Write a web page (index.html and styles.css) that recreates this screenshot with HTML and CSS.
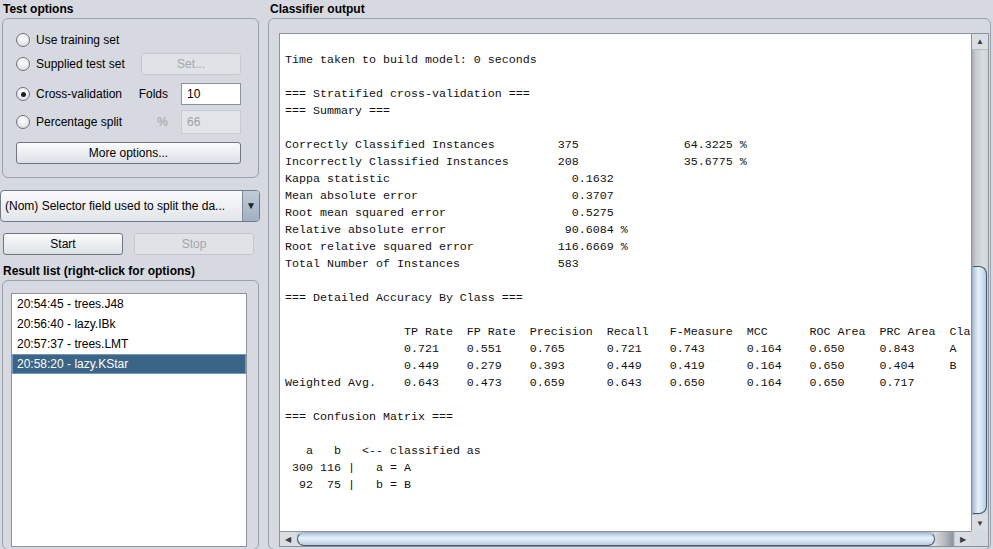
FILE: index.html
```html
<!DOCTYPE html>
<html>
<head>
<meta charset="utf-8">
<title>Weka Classify</title>
<link rel="stylesheet" href="styles.css">
</head>
<body>
<div class="app">
  <div class="left">
    <div class="title">Test options</div>
    <div class="group test-opts">
      <div class="row r1"><span class="radio"></span><span class="lbl">Use training set</span></div>
      <div class="row r2"><span class="radio"></span><span class="lbl">Supplied test set</span><div class="btn disabled set">Set...</div></div>
      <div class="row r3"><span class="radio on"></span><span class="lbl">Cross-validation</span><span class="flabel">Folds</span><span class="field">10</span></div>
      <div class="row r4"><span class="radio"></span><span class="lbl">Percentage split</span><span class="flabel dim">%</span><span class="field disabled">66</span></div>
      <div class="btn more">More options...</div>
    </div>
    <div class="combo"><span class="combo-text">(Nom) Selector field used to split the da...</span><span class="combo-arrow">&#9660;</span></div>
    <div class="actions"><div class="btn start">Start</div><div class="btn disabled stop">Stop</div></div>
    <div class="title t2">Result list (right-click for options)</div>
    <div class="group results">
      <ul class="list">
        <li>20:54:45 - trees.J48</li>
        <li>20:56:40 - lazy.IBk</li>
        <li>20:57:37 - trees.LMT</li>
        <li class="sel">20:58:20 - lazy.KStar</li>
      </ul>
    </div>
  </div>
  <div class="right">
    <div class="title">Classifier output</div>
    <div class="group output">
      <div class="scrollpane">
        <div class="textarea"><pre>Time taken to build model: 0 seconds

=== Stratified cross-validation ===
=== Summary ===

Correctly Classified Instances         375               64.3225 %
Incorrectly Classified Instances       208               35.6775 %
Kappa statistic                          0.1632
Mean absolute error                      0.3707
Root mean squared error                  0.5275
Relative absolute error                 90.6084 %
Root relative squared error            116.6669 %
Total Number of Instances              583     

=== Detailed Accuracy By Class ===

                 TP Rate  FP Rate  Precision  Recall   F-Measure  MCC      ROC Area  PRC Area  Class
                 0.721    0.551    0.765      0.721    0.743      0.164    0.650     0.843     A
                 0.449    0.279    0.393      0.449    0.419      0.164    0.650     0.404     B
Weighted Avg.    0.643    0.473    0.659      0.643    0.650      0.164    0.650     0.717     

=== Confusion Matrix ===

   a   b   &lt;-- classified as
 300 116 |   a = A
  92  75 |   b = B
</pre></div>
        <div class="vscroll">
          <div class="sb-btn up">&#9650;</div>
          <div class="vtrack"><div class="vthumb"></div></div>
          <div class="sb-btn down">&#9660;</div>
        </div>
        <div class="hscroll">
          <div class="sb-btn left">&#9664;</div>
          <div class="htrack"><div class="hthumb"></div><div class="hnotch"></div></div>
          <div class="sb-btn rightb">&#9654;</div>
        </div>
        <div class="corner"></div>
      </div>
    </div>
  </div>
</div>
</body>
</html>
```

FILE: styles.css
```css
* { box-sizing: border-box; }
html, body {
  margin: 0;
  padding: 0;
}
body {
  width: 993px;
  height: 549px;
  overflow: hidden;
  background: #d6d9df;
  font-family: "Liberation Sans", Arial, sans-serif;
  font-size: 12px;
  color: #000;
}
.app {
  display: flex;
  height: 549px;
  overflow: hidden;
}
.left {
  width: 262px;
  flex: none;
  display: flex;
  flex-direction: column;
}
.right {
  margin-left: 6px;
  width: 723px;
  flex: none;
  display: flex;
  flex-direction: column;
}
.title {
  height: 18px;
  line-height: 18px;
  font-weight: bold;
  padding-left: 3px;
  flex: none;
}
.right .title { padding-left: 2px; }
.group {
  border: 1px solid #9ba1a9;
  border-radius: 6px;
  flex: none;
}
.test-opts {
  margin-left: 2px;
  width: 257px;
  height: 160px;
  padding: 0 17px 0 13px;
}
.row {
  display: flex;
  align-items: center;
}
.r1 { margin-top: 11px; height: 20px; }
.r2 { margin-top: 3px; height: 22px; }
.r3 { margin-top: 8px; height: 22px; }
.r4 { margin-top: 5px; height: 24px; }
.radio {
  width: 14px;
  height: 14px;
  border-radius: 50%;
  border: 1px solid #6c7480;
  background: radial-gradient(circle at 50% 35%, #ffffff 0%, #f1f2f4 40%, #cfd3d9 100%);
  flex: none;
  position: relative;
}
.radio.on::after {
  content: "";
  position: absolute;
  left: 3.5px;
  top: 3.5px;
  width: 5px;
  height: 5px;
  border-radius: 50%;
  background: #1b1e22;
}
.lbl {
  margin-left: 6px;
  width: 102px;
  white-space: nowrap;
}
.flabel {
  width: 30px;
  text-align: right;
}
.flabel.dim { color: #9da2a8; }
.field {
  margin-left: 13px;
  width: 60px;
  height: 100%;
  background: #fff;
  border: 1px solid #8a929b;
  display: flex;
  align-items: center;
  padding-left: 5px;
}
.field.disabled {
  background: #e1e4e8;
  border-color: #c8ccd2;
  color: #9ca1a7;
}
.btn {
  display: flex;
  align-items: center;
  justify-content: center;
  height: 22px;
  border: 1px solid #6e7680;
  border-radius: 3px;
  background: linear-gradient(#fbfbfc, #eceef1 50%, #dde1e6);
  white-space: nowrap;
}
.btn.disabled {
  border-color: #c4c9cf;
  background: #dfe2e6;
  color: #a2a7ad;
}
.set {
  margin-left: auto;
  width: 100px;
}
.more {
  margin-top: 8px;
  width: 225px;
}
.combo {
  margin-top: 12px;
  width: 260px;
  height: 32px;
  border: 1px solid #6f7b88;
  border-radius: 4px;
  display: flex;
  align-items: stretch;
  background: linear-gradient(#fbfbfc, #eef0f3 50%, #e2e5e9);
  overflow: hidden;
  flex: none;
}
.combo-text {
  flex: 1;
  display: flex;
  align-items: center;
  padding-left: 4px;
  white-space: nowrap;
}
.combo-arrow {
  width: 17px;
  flex: none;
  border-left: 1px solid #7d8a98;
  background: linear-gradient(#c2ccd7, #9fb0c2);
  font-size: 10px;
  color: #1e2329;
  display: flex;
  align-items: center;
  justify-content: center;
  padding-bottom: 2px;
}
.actions {
  margin-top: 11px;
  display: flex;
  gap: 11px;
  padding-left: 3px;
  flex: none;
}
.start, .stop { width: 120px; }
.t2 { margin-top: 7px; }
.results {
  margin-left: 2px;
  width: 257px;
  height: 270px;
  padding: 12px 11px 0 8px;
}
.list {
  list-style: none;
  margin: 0;
  padding: 0;
  height: 254px;
  background: #fff;
  border: 1px solid #8c939c;
}
.list li {
  height: 20px;
  line-height: 20px;
  padding-left: 5px;
  white-space: nowrap;
}
.list li.sel {
  background: #3b6587;
  border: 1px solid #7199bd;
  line-height: 18px;
  padding-left: 4px;
  color: #fff;
}
.output {
  width: 723px;
  height: 532px;
  padding: 14px 0 0 10px;
}
.scrollpane {
  width: 710px;
  height: 514px;
  border: 1px solid #8a929b;
  display: grid;
  grid-template-columns: 691px 17px;
  grid-template-rows: 497px 15px;
}
.textarea {
  background: #fff;
  overflow: hidden;
  padding: 18px 0 0 5px;
}
.textarea pre {
  margin: 0;
  font-family: "Liberation Mono", "Courier New", monospace;
  font-size: 11.67px;
  line-height: 17px;
  color: #111;
  white-space: pre;
}
.vscroll {
  display: flex;
  flex-direction: column;
  border-left: 1px solid #8b929a;
  background: linear-gradient(90deg, #a9aeb4, #c9cdd2 25%, #d9dce0 70%, #cfd3d8);
}
.sb-btn {
  flex: none;
  display: flex;
  align-items: center;
  justify-content: center;
  font-size: 8px;
  color: #3a3f45;
  background: #dadde1;
}
.up, .down { height: 16px; }
.up { border-bottom: 1px solid #b8bdc3; }
.vtrack {
  flex: 1;
  display: flex;
  flex-direction: column;
  justify-content: flex-end;
  padding-bottom: 1px;
}
.vthumb {
  height: 248px;
  margin-right: 1px;
  border: 1px solid #3f566d;
  border-left-color: #9fb4c9;
  border-radius: 2px 8px 8px 2px;
  background: linear-gradient(90deg, #aac3da, #e9f1f8 40%, #d4e3f0 70%, #b5cbe0);
}
.hscroll {
  display: flex;
  border-top: 1px solid #8b929a;
  background: linear-gradient(#cfd3d8, #dcdfe3);
}
.sb-btn.left, .sb-btn.rightb { width: 16px; }
.htrack {
  flex: 1;
  display: flex;
  padding-left: 1px;
}
.hthumb {
  width: 638px;
  height: 100%;
  border: 1px solid #3f566d;
  border-top-color: #9fb4c9;
  border-radius: 8px;
  background: linear-gradient(#aac3da, #e9f1f8 40%, #d4e3f0 70%, #b5cbe0);
}
.hnotch {
  flex: 1;
  background: linear-gradient(90deg, #d6d9dd, #b4b9bf 50%, #8c939a 90%, #d6d9dd);
}
.corner {
  background: #d6d9df;
}
```
